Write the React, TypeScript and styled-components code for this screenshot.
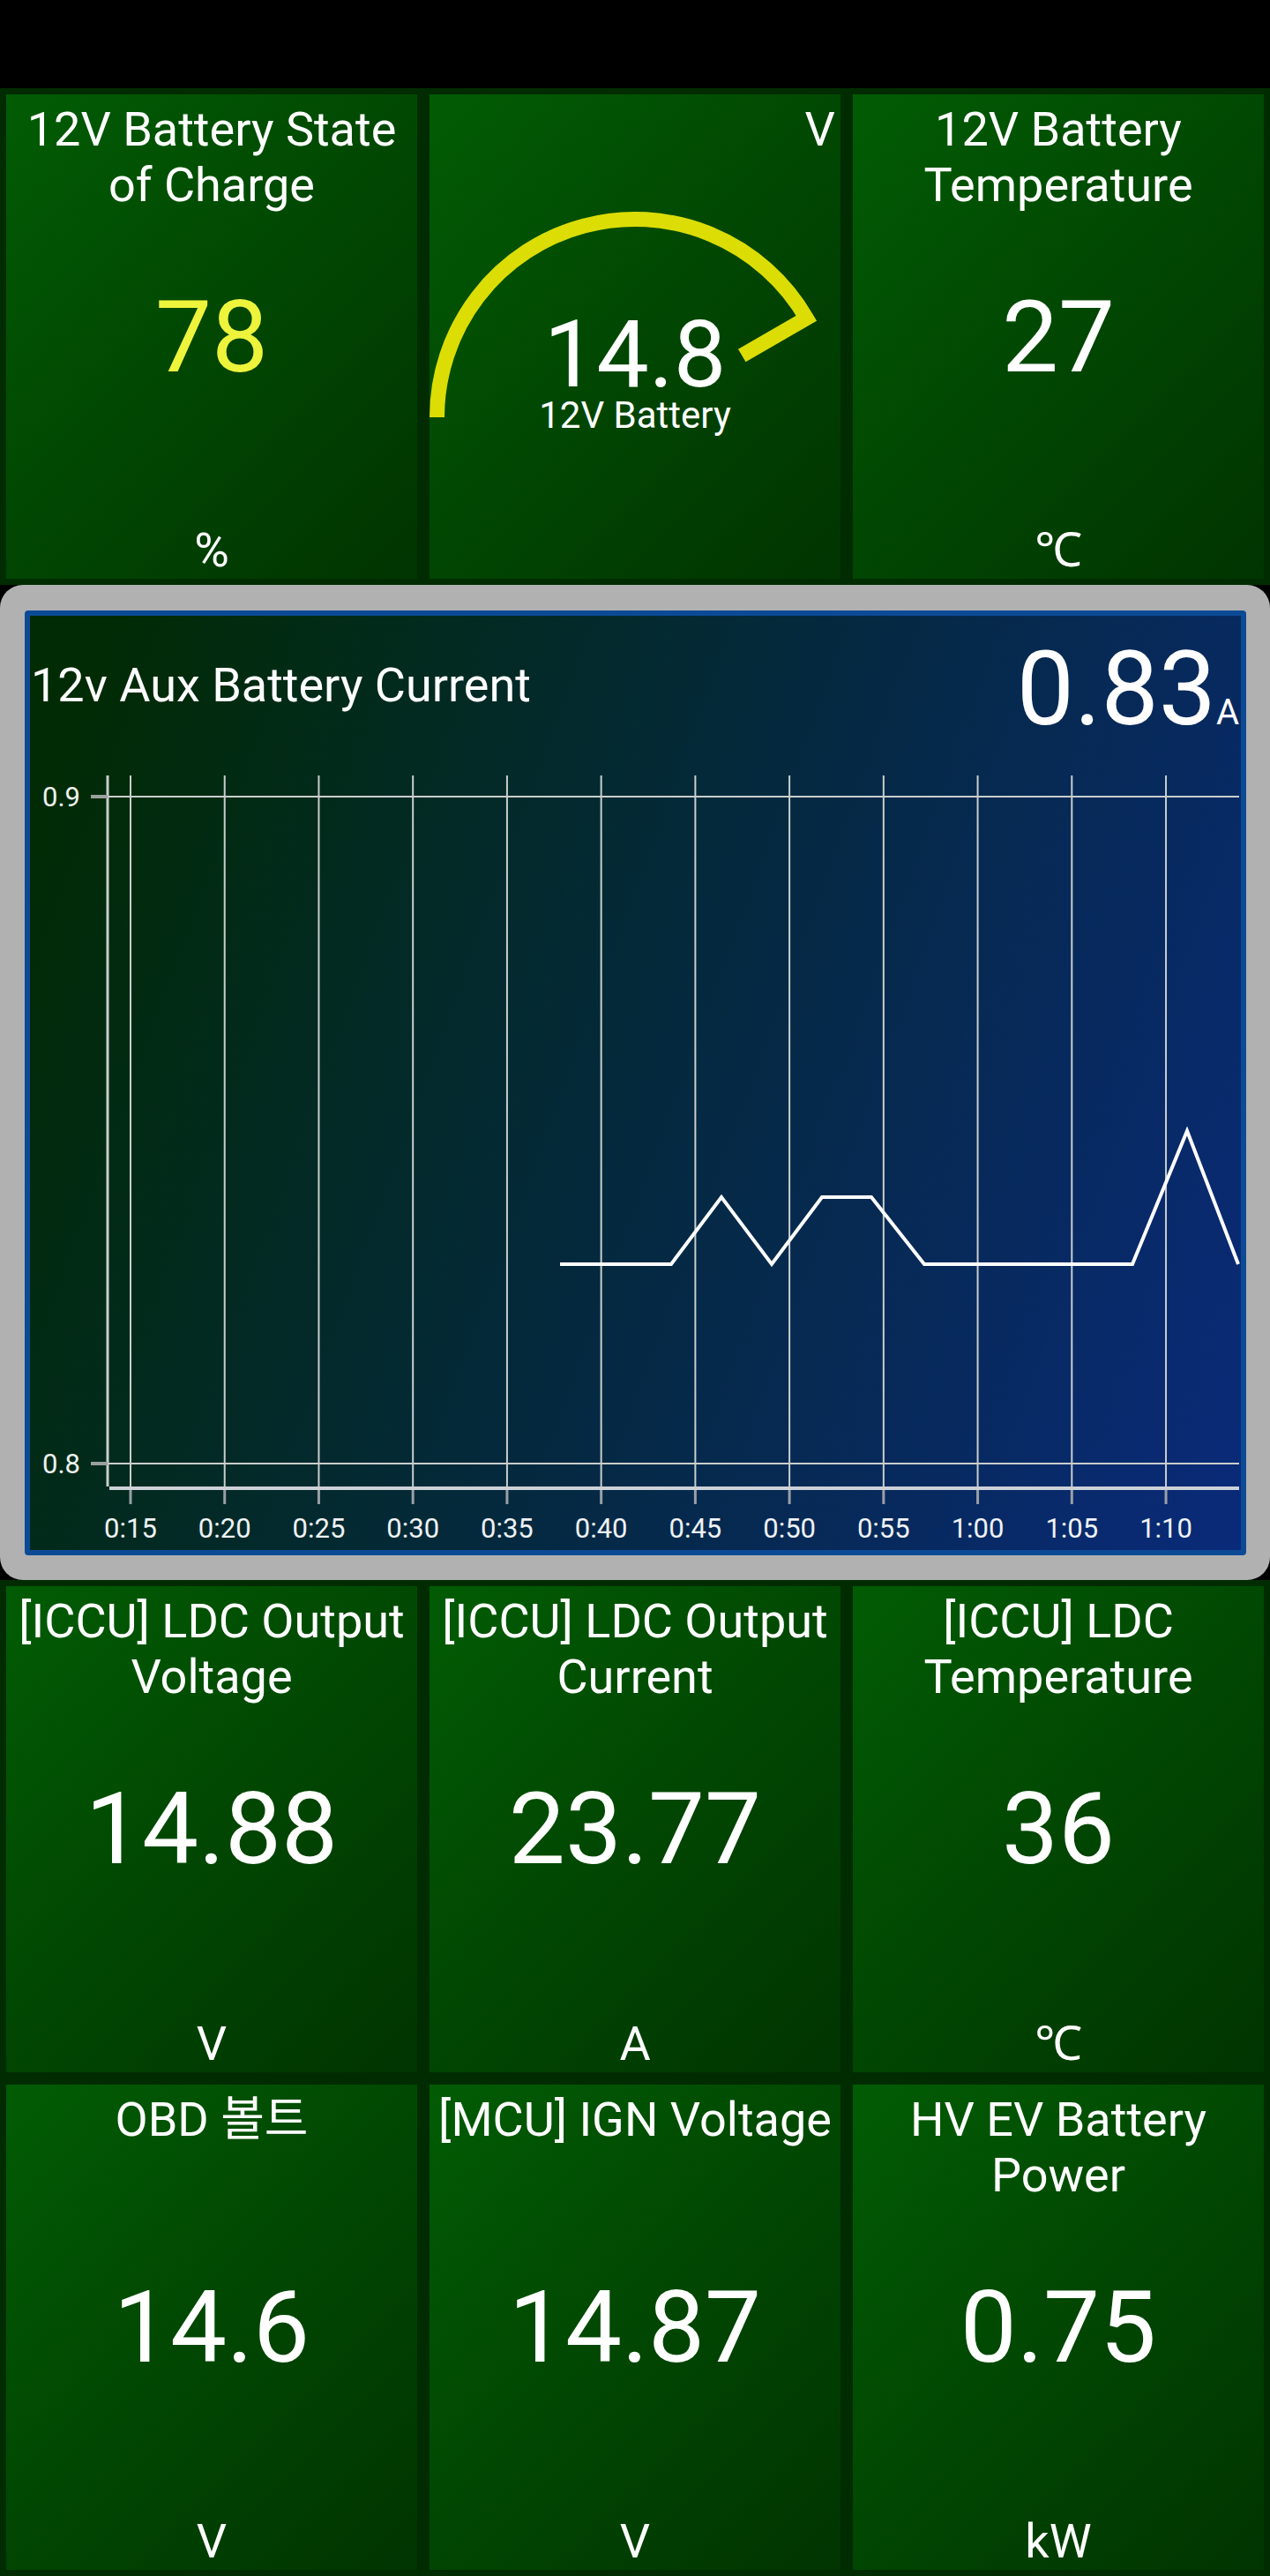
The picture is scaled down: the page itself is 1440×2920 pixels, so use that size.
import React from 'react';
import styled, {createGlobalStyle} from 'styled-components';

const FONT = `Roboto, 'Noto Sans', 'Noto Sans CJK KR', sans-serif`;

const GlobalStyle = createGlobalStyle`
  body {
    margin: 0;
    background: #000;
    font-family: ${FONT};
  }
`;

type Reading = {title: string; value: string; unit: string; color?: string};

const middleRows: Reading[] = [
    {title: '[ICCU] LDC Output Voltage', value: '14.88', unit: 'V'},
    {title: '[ICCU] LDC Output Current', value: '23.77', unit: 'A'},
    {title: '[ICCU] LDC Temperature', value: '36', unit: '℃'},
    {title: 'OBD 볼트', value: '14.6', unit: 'V'},
    {title: '[MCU] IGN Voltage', value: '14.87', unit: 'V'},
    {title: 'HV EV Battery Power', value: '0.75', unit: 'kW'},
];

const xLabels = ['0:15', '0:20', '0:25', '0:30', '0:35', '0:40', '0:45', '0:50', '0:55', '1:00', '1:05', '1:10'];
// samples in plot pixels
const series: [number, number][] = [
    [601, 573], [669, 573], [727, 573], [784, 497], [841, 573], [898, 497], [954, 497],
    [1014, 573], [1071, 573], [1131, 573], [1187, 573], [1250, 573], [1312, 422], [1370, 573],
];

const Screen = styled.div`
  width: 1440px;
  color: #fff;
  background: #000;
`;

const StatusBar = styled.div`
  height: 100px;
  background: #000;
`;

const TileGrid = styled.div<{$height: number}>`
  box-sizing: border-box;
  height: ${p => p.$height}px;
  display: grid;
  grid-template-columns: repeat(3, 1fr);
  grid-auto-rows: 1fr;
  gap: 14px;
  padding: 7px;
  background: #012c01;
`;

const Tile = styled.div`
  position: relative;
  display: grid;
  grid-template-rows: 1fr auto 1fr;
  min-height: 0;
  overflow: hidden;
  text-align: center;
  background: linear-gradient(135deg, #025c04 0%, #014702 50%, #013401 100%);
`;

const Title = styled.div`
  align-self: start;
  padding: 8px 6px 0;
  font-size: 54px;
  line-height: 63px;
`;

const Value = styled.div<{$color?: string}>`
  font-size: 114px;
  line-height: 1;
  color: ${p => p.$color || '#fff'};
`;

const Unit = styled.div`
  align-self: end;
  padding-bottom: 1px;
  font-size: 54px;
  line-height: 63px;
`;

const GaugeTile = styled(Tile)`
  display: block;
`;

const GaugeArt = styled.svg`
  position: absolute;
  inset: 0;
`;

const CornerUnit = styled.div`
  position: relative;
  padding: 8px 6px 0;
  text-align: right;
  font-size: 54px;
  line-height: 63px;
`;

const GaugeValue = styled.div`
  position: relative;
  margin-top: 179px;
  font-size: 106px;
  line-height: 0.86;
`;

const GaugeLabel = styled.div`
  position: relative;
  margin-top: 4px;
  font-size: 42px;
  line-height: 0.9;
`;

const ChartFrame = styled.div`
  box-sizing: border-box;
  height: 1128px;
  padding: 29px 27px 28px 28px;
  border-radius: 26px;
  background: #b1b1b1;
`;

const ChartBox = styled.div`
  box-sizing: border-box;
  height: 100%;
  display: flex;
  flex-direction: column;
  border: 6px solid #0c4a96;
  border-radius: 4px;
  background: linear-gradient(110deg, #012b04 5%, #04293c 50%, #0a2a7a 100%);
`;

const ChartHeader = styled.div`
  display: flex;
  align-items: center;
  justify-content: space-between;
  padding: 25px 2px 0 1px;
`;

const ChartTitle = styled.div`
  margin-bottom: 9px;
  font-size: 54px;
  line-height: 63px;
`;

const ChartValue = styled.div`
  font-size: 116px;
  line-height: 1;
`;

const ChartUnit = styled.span`
  font-size: 40px;
`;

const Plot = styled.svg`
  display: block;
  margin-top: 21px;
`;

function Gauge() {
    const cx = 233, cy = 366, r = 224.5;
    const a = Math.PI / 6;
    const ex = cx + r * Math.cos(a), ey = cy - r * Math.sin(a);
    const ix = cx + 140 * Math.cos(a), iy = cy - 140 * Math.sin(a);
    return (
        <GaugeTile>
            <GaugeArt width="466" height="549" viewBox="0 0 466 549">
                <path
                    d={`M ${cx - r} ${cy} A ${r} ${r} 0 0 1 ${ex} ${ey} L ${ix} ${iy}`}
                    fill="none" stroke="#dbdd05" strokeWidth="17" strokeLinejoin="miter"
                />
            </GaugeArt>
            <CornerUnit>V</CornerUnit>
            <GaugeValue>14.8</GaugeValue>
            <GaugeLabel>12V Battery</GaugeLabel>
        </GaugeTile>
    );
}

function ReadingTile({title, value, unit, color}: Reading) {
    return (
        <Tile>
            <Title>{title}</Title>
            <Value $color={color}>{value}</Value>
            <Unit>{unit}</Unit>
        </Tile>
    );
}

function AuxChart() {
    const grid = xLabels.map((_, i) => 114 + i * 106.73);
    const line = series.map(([x, y]) => `${x},${y}`).join(' ');
    return (
        <ChartFrame>
            <ChartBox>
                <ChartHeader>
                    <ChartTitle>12v Aux Battery Current</ChartTitle>
                    <ChartValue>0.83<ChartUnit>A</ChartUnit></ChartValue>
                </ChartHeader>
                <Plot width="1373" height="897" viewBox="0 0 1373 897">
                    {grid.map(x => (
                        <g key={x}>
                            <line x1={x} y1={19} x2={x} y2={827} stroke="#c9cecc" strokeWidth="2"/>
                            <line x1={x} y1={829} x2={x} y2={845} stroke="#9a9fa6" strokeWidth="3"/>
                        </g>
                    ))}
                    <line x1={88} y1={19} x2={88} y2={825} stroke="#c9cecc" strokeWidth="3"/>
                    {[[43, '0.9'], [799, '0.8']].map(([y, t]) => (
                        <g key={t}>
                            <line x1={69} y1={y} x2={88} y2={y} stroke="#9aa09c" strokeWidth="4"/>
                            <line x1={88} y1={y} x2={1371} y2={y} stroke="#c9cecc" strokeWidth="2"/>
                            <text x={57} y={Number(y) + 11} textAnchor="end" fontSize="31" fill="#eef2ee" fontFamily={FONT}>{t}</text>
                        </g>
                    ))}
                    <line x1={90} y1={827} x2={1371} y2={827} stroke="#ccd2d8" strokeWidth="4"/>
                    {grid.map((x, i) => (
                        <text key={i} x={x} y={883} textAnchor="middle" fontSize="31" fill="#eef2f4" fontFamily={FONT}>{xLabels[i]}</text>
                    ))}
                    <polyline points={line} fill="none" stroke="#fff" strokeWidth="4" strokeLinejoin="miter"/>
                </Plot>
            </ChartBox>
        </ChartFrame>
    );
}

export default function App() {
    return (
        <Screen>
            <GlobalStyle/>
            <StatusBar/>
            <TileGrid $height={563}>
                <ReadingTile title="12V Battery State of Charge" value="78" unit="%" color="#eef43c"/>
                <Gauge/>
                <ReadingTile title="12V Battery Temperature" value="27" unit="℃"/>
            </TileGrid>
            <AuxChart/>
            <TileGrid $height={1129}>
                {middleRows.map(r => <ReadingTile key={r.title} {...r}/>)}
            </TileGrid>
        </Screen>
    );
}
